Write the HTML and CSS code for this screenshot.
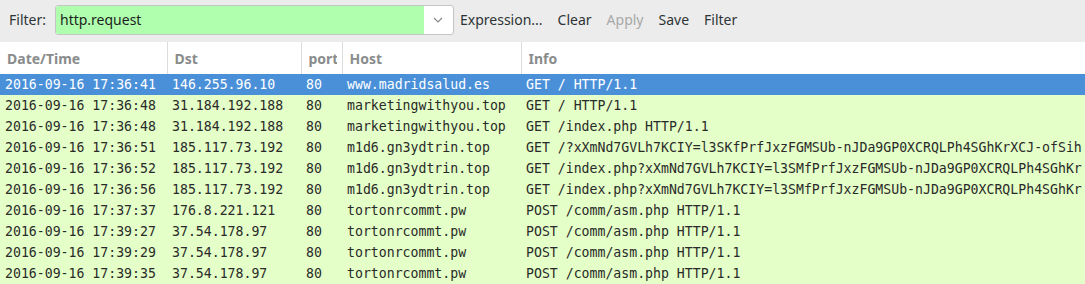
FILE: index.html
```html
<!DOCTYPE html>
<html lang="en">
<head>
    <meta charset="UTF-8">
    <meta name="viewport" content="width=device-width, initial-scale=1.0">
    <title>Packet List</title>
    <link rel="stylesheet" href="styles.css">
</head>
<body>
    <div class="toolbar">
        <label for="filter">Filter:</label>
        <div class="filter-box">
            <input type="text" id="filter" value="http.request">
            <span class="filter-drop">
                <svg width="10" height="6" viewBox="0 0 10 6"><path d="M1 1 L5 5 L9 1" fill="none" stroke="#888" stroke-width="1.2"/></svg>
            </span>
        </div>
        <button>Expression...</button>
        <button>Clear</button>
        <button class="disabled">Apply</button>
        <button>Save</button>
        <button>Filter</button>
    </div>

    <table class="packets">
        <colgroup>
            <col class="c-time">
            <col class="c-dst">
            <col class="c-port">
            <col class="c-host">
            <col>
        </colgroup>
        <thead>
            <tr>
                <th><span>Date/Time</span></th>
                <th><span>Dst</span></th>
                <th><span>port</span></th>
                <th><span>Host</span></th>
                <th><span>Info</span></th>
            </tr>
        </thead>
        <tbody>
            <tr class="selected">
                <td>2016-09-16 17:36:41</td><td>146.255.96.10</td><td>80</td><td>www.madridsalud.es</td><td>GET / HTTP/1.1</td>
            </tr>
            <tr>
                <td>2016-09-16 17:36:48</td><td>31.184.192.188</td><td>80</td><td>marketingwithyou.top</td><td>GET / HTTP/1.1</td>
            </tr>
            <tr>
                <td>2016-09-16 17:36:48</td><td>31.184.192.188</td><td>80</td><td>marketingwithyou.top</td><td>GET /index.php HTTP/1.1</td>
            </tr>
            <tr>
                <td>2016-09-16 17:36:51</td><td>185.117.73.192</td><td>80</td><td>m1d6.gn3ydtrin.top</td><td>GET /?xXmNd7GVLh7KCIY=l3SKfPrfJxzFGMSUb-nJDa9GP0XCRQLPh4SGhKrXCJ-ofSih</td>
            </tr>
            <tr>
                <td>2016-09-16 17:36:52</td><td>185.117.73.192</td><td>80</td><td>m1d6.gn3ydtrin.top</td><td>GET /index.php?xXmNd7GVLh7KCIY=l3SMfPrfJxzFGMSUb-nJDa9GP0XCRQLPh4SGhKr</td>
            </tr>
            <tr>
                <td>2016-09-16 17:36:56</td><td>185.117.73.192</td><td>80</td><td>m1d6.gn3ydtrin.top</td><td>GET /index.php?xXmNd7GVLh7KCIY=l3SMfPrfJxzFGMSUb-nJDa9GP0XCRQLPh4SGhKr</td>
            </tr>
            <tr>
                <td>2016-09-16 17:37:37</td><td>176.8.221.121</td><td>80</td><td>tortonrcommt.pw</td><td>POST /comm/asm.php HTTP/1.1</td>
            </tr>
            <tr>
                <td>2016-09-16 17:39:27</td><td>37.54.178.97</td><td>80</td><td>tortonrcommt.pw</td><td>POST /comm/asm.php HTTP/1.1</td>
            </tr>
            <tr>
                <td>2016-09-16 17:39:29</td><td>37.54.178.97</td><td>80</td><td>tortonrcommt.pw</td><td>POST /comm/asm.php HTTP/1.1</td>
            </tr>
            <tr>
                <td>2016-09-16 17:39:35</td><td>37.54.178.97</td><td>80</td><td>tortonrcommt.pw</td><td>POST /comm/asm.php HTTP/1.1</td>
            </tr>
        </tbody>
    </table>
</body>
</html>
```

FILE: styles.css
```css
* {
    margin: 0;
    padding: 0;
    box-sizing: border-box;
}
body {
    background-color: #e4ffc7;
    overflow: hidden;
    font-family: "Noto Sans", sans-serif;
}
.toolbar {
    display: flex;
    align-items: center;
    gap: 15px;
    height: 42px;
    padding-left: 9px;
    background-color: #ececec;
    font-size: 14px;
    color: #2e3436;
}
.toolbar label {
    margin-right: -6px;
    margin-top: -3px;
}
.filter-box {
    display: flex;
    width: 399px;
    height: 30px;
    margin-top: -3px;
    margin-right: -9px;
    border: 1px solid #c4c6c4;
    border-radius: 3px;
    background-color: #fff;
    overflow: hidden;
}
.filter-box input {
    flex: 1;
    border: none;
    outline: none;
    padding-left: 4px;
    background-color: #afffaf;
    font-family: "Noto Sans", sans-serif;
    font-size: 14px;
    color: #1e1e1e;
}
.filter-drop {
    display: flex;
    align-items: center;
    justify-content: center;
    width: 29px;
}
.toolbar button {
    border: none;
    background: none;
    margin-top: -3px;
    font-family: "Noto Sans", sans-serif;
    font-size: 14px;
    color: #2e3436;
}
.toolbar button.disabled {
    color: #a8a8a8;
}
.packets {
    width: 100%;
    table-layout: fixed;
    border-collapse: collapse;
}
.c-time { width: 167px; }
.c-dst { width: 134px; }
.c-port { width: 41px; }
.c-host { width: 179px; }
.packets th {
    height: 32px;
    padding-left: 7px;
    padding-right: 5px;
    text-align: left;
    background-color: #fff;
    border-left: 1px solid #dcdcdc;
    font-size: 14px;
    font-weight: bold;
    color: #8a8c8c;
}
.packets th span {
    display: block;
    white-space: nowrap;
    overflow: hidden;
}
.packets th:first-child {
    border-left: none;
}
.packets td {
    height: 21px;
    padding-left: 5px;
    font-family: "DejaVu Sans Mono", monospace;
    font-size: 13.2px;
    color: #2a2a2a;
    white-space: nowrap;
    overflow: hidden;
    text-overflow: clip;
}
.packets tr.selected td {
    background-color: #4a90d9;
    color: #fff;
}
```
